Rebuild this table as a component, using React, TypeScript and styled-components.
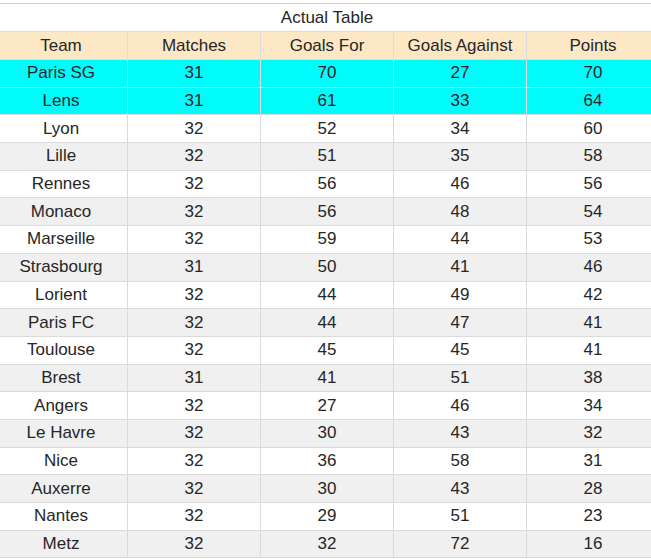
import { createGlobalStyle } from 'styled-components';
import styled from 'styled-components';

const GlobalStyle = createGlobalStyle`
  html, body {
    margin: 0;
    padding: 0;
    background: #ffffff;
    overflow: hidden;
  }
`;

const Page = styled.div`
  padding-top: 3px;
  margin-left: -6px;
  width: 666px;
`;

const Table = styled.table`
  width: 666px;
  table-layout: fixed;
  border-collapse: collapse;
  font-family: 'Liberation Sans', Arial, sans-serif;
  font-size: 17px;
  color: #262626;
  text-align: center;
`;

const TitleCell = styled.th`
  height: 27px;
  padding: 0;
  font-weight: normal;
  background: #ffffff;
  border-top: 1px solid #cfcfcf;
  border-bottom: 1px solid #dcdcdc;
`;

const HeadCell = styled.th`
  height: 27px;
  padding: 0;
  font-weight: normal;
  background: #fde8c6;
  border: 1px solid #dcdcdc;
`;

const Row = styled.tr<{ $tone: 'top' | 'odd' | 'even' }>`
  background: ${(p) =>
    p.$tone === 'top' ? '#00fbfb' : p.$tone === 'even' ? '#f0f0f0' : '#ffffff'};
`;

const Cell = styled.td`
  height: 26.7px;
  padding: 0;
  border: 1px solid #dadada;
`;

const teams = [
  ['Paris SG', 31, 70, 27, 70],
  ['Lens', 31, 61, 33, 64],
  ['Lyon', 32, 52, 34, 60],
  ['Lille', 32, 51, 35, 58],
  ['Rennes', 32, 56, 46, 56],
  ['Monaco', 32, 56, 48, 54],
  ['Marseille', 32, 59, 44, 53],
  ['Strasbourg', 31, 50, 41, 46],
  ['Lorient', 32, 44, 49, 42],
  ['Paris FC', 32, 44, 47, 41],
  ['Toulouse', 32, 45, 45, 41],
  ['Brest', 31, 41, 51, 38],
  ['Angers', 32, 27, 46, 34],
  ['Le Havre', 32, 30, 43, 32],
  ['Nice', 32, 36, 58, 31],
  ['Auxerre', 32, 30, 43, 28],
  ['Nantes', 32, 29, 51, 23],
  ['Metz', 32, 32, 72, 16],
];

const columns = ['Team', 'Matches', 'Goals For', 'Goals Against', 'Points'];

export default function App() {
  return (
    <>
      <GlobalStyle />
      <Page>
        <Table>
          <thead>
            <tr>
              <TitleCell colSpan={5}>Actual Table</TitleCell>
            </tr>
            <tr>
              {columns.map((c) => (
                <HeadCell key={c}>{c}</HeadCell>
              ))}
            </tr>
          </thead>
          <tbody>
            {teams.map((t, i) => (
              <Row key={t[0]} $tone={i < 2 ? 'top' : i % 2 === 0 ? 'odd' : 'even'}>
                {t.map((v, j) => (
                  <Cell key={j}>{v}</Cell>
                ))}
              </Row>
            ))}
          </tbody>
        </Table>
      </Page>
    </>
  );
}
